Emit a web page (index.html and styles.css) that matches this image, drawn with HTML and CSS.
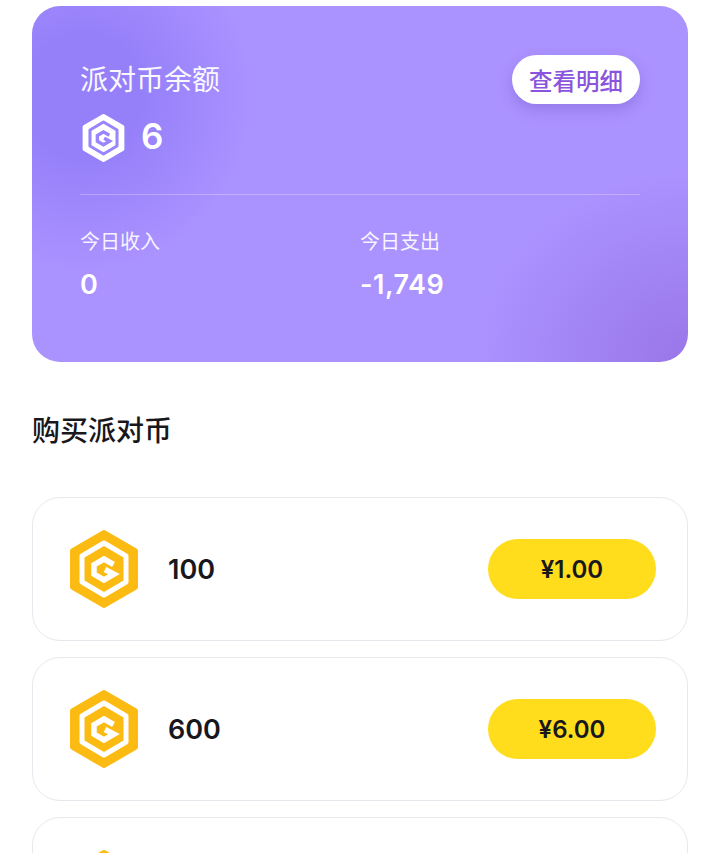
FILE: index.html
```html
<!DOCTYPE html>
<html lang="zh">
<head>
<meta charset="utf-8">
<title>派对币</title>
<link rel="stylesheet" href="styles.css">
</head>
<body>
<svg class="defs" width="0" height="0">
  <symbol id="coin" viewBox="0 0 70 78">
    <path class="hex-outer" d="M35 3 L66 21 V57 L35 75 L4 57 V21 Z"/>
    <path class="hex-inner" d="M35 13 L57 26 V52 L35 65 L13 52 V26 Z"/>
    <path class="g" d="M44.500 34.500 L35 29 L25 34.800 V44.200 L35 50 L45 44.200 L36 39.500"/>
  </symbol>
</svg>
<main class="page">
  <section class="balance">
    <div class="balance-top">
      <div>
        <div class="balance-title">派对币余额</div>
        <div class="balance-value">
          <svg class="coin-white"><use href="#coin"/></svg>
          <span>6</span>
        </div>
      </div>
      <button class="detail-btn">查看明细</button>
    </div>
    <div class="stats">
      <div class="stat">
        <div class="stat-label">今日收入</div>
        <div class="stat-value">0</div>
      </div>
      <div class="stat">
        <div class="stat-label">今日支出</div>
        <div class="stat-value">-1,749</div>
      </div>
    </div>
  </section>
  <h2 class="buy-title">购买派对币</h2>
  <ul class="packs">
    <li class="pack">
      <svg class="coin-gold"><use href="#coin"/></svg>
      <span class="pack-amount">100</span>
      <button class="price">¥1.00</button>
    </li>
    <li class="pack">
      <svg class="coin-gold"><use href="#coin"/></svg>
      <span class="pack-amount">600</span>
      <button class="price">¥6.00</button>
    </li>
    <li class="pack">
      <svg class="coin-gold"><use href="#coin"/></svg>
    </li>
  </ul>
</main>
</body>
</html>
```
FILE: styles.css
```css
* { box-sizing: border-box; }
html, body { margin: 0; height: 853px; overflow: hidden; background: #fff; }
body { font-family: "Inter", "Noto Sans CJK SC", sans-serif; }
.defs { position: absolute; }
.page { padding: 6px 31px 0 32px; }

.balance {
  height: 356px;
  padding: 48px 48px 0;
  border-radius: 28px;
  color: #fff;
  background:
    radial-gradient(ellipse 210px 190px at 100% 100%, #9a76e8 0, rgba(154,118,232,.55) 45%, rgba(154,118,232,0) 100%),
    radial-gradient(ellipse 170px 175px at 50px 90px, #9680fa 35%, rgba(150,128,250,0) 100%),
    #aa92ff;
}
.balance-top {
  display: flex;
  justify-content: space-between;
  align-items: flex-start;
  height: 141px;
  border-bottom: 1px solid rgba(255,255,255,.28);
}
.balance-title {
  font-family: "Noto Sans CJK SC", sans-serif;
  font-size: 28px;
  line-height: 36px;
  margin-top: 6px;
  opacity: .95;
}
.balance-value {
  display: flex;
  align-items: center;
  gap: 16px;
  margin-top: 14px;
  font-size: 35px;
  font-weight: 600;
  line-height: 50px;
}
.coin-white { width: 43px; height: 48px; margin: 4px 0 0 2px; --hex: #fff; --inner: #9a85fc; }
.detail-btn {
  width: 128px;
  height: 49px;
  margin-top: 1px;
  border: 0;
  border-radius: 25px;
  background: #fff;
  color: #8a55dc;
  font-family: "Noto Sans CJK SC", sans-serif;
  font-size: 23.500px;
  font-weight: 500;
  padding: 0;
  box-shadow: 0 6px 14px rgba(100,70,180,.3);
}

.stats { display: flex; padding-top: 32px; }
.stat { width: 280px; }
.stat-label {
  font-family: "Noto Sans CJK SC", sans-serif;
  font-size: 20px;
  line-height: 28px;
  opacity: .9;
}
.stat-value {
  margin-top: 12px;
  font-size: 27px;
  font-weight: 600;
  line-height: 36px;
  letter-spacing: .5px;
}

.buy-title {
  margin: 47px 0 0;
  font-family: "Noto Sans CJK SC", sans-serif;
  font-size: 28px;
  font-weight: 500;
  line-height: 40px;
  color: #17171c;
}

.packs { list-style: none; margin: 48px 0 0; padding: 0; display: flex; flex-direction: column; gap: 16px; }
.pack {
  display: flex;
  align-items: center;
  height: 144px;
  padding: 0 31px 0 36px;
  border: 1px solid #e9e7ee;
  border-radius: 28px;
}
.coin-gold { width: 70px; height: 78px; flex: none; --hex: #fbbb12; --inner: #fff; }
.pack-amount {
  margin-left: 29px;
  flex: 1;
  font-size: 27px;
  font-weight: 600;
  color: #17171c;
}
.price {
  width: 168px;
  height: 60px;
  border: 0;
  border-radius: 30px;
  padding: 0;
  background: #ffdc1c;
  color: #17171c;
  font-family: "Inter", sans-serif;
  font-size: 24px;
  font-weight: 600;
}

.hex-outer { fill: var(--hex); stroke: var(--hex); stroke-width: 6; stroke-linejoin: round; }
.hex-inner { fill: var(--hex); stroke: var(--inner); stroke-width: 5; stroke-linejoin: round; }
.g { fill: none; stroke: var(--inner); stroke-width: 5.500; stroke-linejoin: miter; }
```
